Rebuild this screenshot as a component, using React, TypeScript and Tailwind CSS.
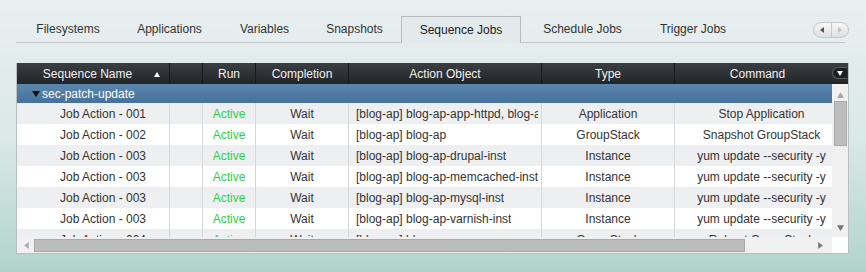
import React from "react";

const tabs: [string, string][] = [
  ["Filesystems", "w-[100px]"],
  ["Applications", "w-[103px]"],
  ["Variables", "w-[87px]"],
  ["Snapshots", "w-[93px]"],
  ["Sequence Jobs", "w-[120px]"],
  ["Schedule Jobs", "w-[123px]"],
  ["Trigger Jobs", "w-[98px]"]
];

const rows = [
  ["Job Action - 001", "[blog-ap] blog-ap-app-httpd, blog-ap-drupal-inst", "Application", "Stop Application"],
  ["Job Action - 002", "[blog-ap] blog-ap", "GroupStack", "Snapshot GroupStack"],
  ["Job Action - 003", "[blog-ap] blog-ap-drupal-inst", "Instance", "yum update --security -y"],
  ["Job Action - 003", "[blog-ap] blog-ap-memcached-inst", "Instance", "yum update --security -y"],
  ["Job Action - 003", "[blog-ap] blog-ap-mysql-inst", "Instance", "yum update --security -y"],
  ["Job Action - 003", "[blog-ap] blog-ap-varnish-inst", "Instance", "yum update --security -y"],
  ["Job Action - 004", "[blog-ap] blog-ap", "GroupStack", "Reboot GroupStack"]
];

function Tri({ dir, color, size = 6 }: { dir: "up" | "down" | "left" | "right"; color: string; size?: number }) {
  const pts = {
    up: "0,6 6,6 3,1",
    down: "0,1 6,1 3,6",
    left: "5,0 5,6 1,3",
    right: "1,0 1,6 5,3"
  }[dir];
  return (
    <svg width={size} height={size} viewBox="0 0 6 6" className="block">
      <polygon points={pts} fill={color} />
    </svg>
  );
}

function TabBar() {
  return (
    <div className="flex items-end h-[27px] w-[829px] border-b border-[#c2c7c9]">
      <div className="flex items-end ml-[2px]">
        {tabs.map(([t, w]) =>
          t === "Sequence Jobs" ? (
            <div
              key={t}
              className={`${w} h-[27px] -mb-px flex items-center justify-center border border-b-0 border-[#b6bbbd] bg-[#e2eaec] text-[#222]`}
            >
              {t}
            </div>
          ) : (
            <div key={t} className={`${w} h-[26px] flex items-center justify-center text-[#333]`}>
              {t}
            </div>
          )
        )}
      </div>
      <div className="ml-auto -mr-[4px] mb-[4px] flex h-[16px] w-[36px] rounded-full border border-[#c4c8ca] bg-gradient-to-b from-[#f7f7f7] to-[#dedfe0] overflow-hidden">
        <div className="flex-1 flex items-center justify-center border-r border-[#c4c8ca]">
          <Tri dir="left" color="#555" />
        </div>
        <div className="flex-1 flex items-center justify-center">
          <Tri dir="right" color="#c2c2c2" />
        </div>
      </div>
    </div>
  );
}

function Header() {
  return (
    <div className="relative flex h-[21px] bg-gradient-to-b from-[#3b3f43] to-[#222528] text-[#f0f0f0]">
      <div className="w-[153px] shrink-0 flex items-center border-r border-[#17191b] pt-px">
        <span className="flex-1 text-center pl-[4px]">Sequence Name</span>
        <span className="mr-[9px]">
          <Tri dir="up" color="#fff" />
        </span>
      </div>
      <div className="w-[33px] shrink-0 border-r border-[#17191b]" />
      <div className="w-[53px] shrink-0 flex items-center justify-center border-r border-[#17191b] pt-px">Run</div>
      <div className="w-[93px] shrink-0 flex items-center justify-center border-r border-[#17191b] pt-px">Completion</div>
      <div className="w-[193px] shrink-0 flex items-center justify-center border-r border-[#17191b] pt-px">Action Object</div>
      <div className="w-[133px] shrink-0 flex items-center justify-center border-r border-[#17191b] pt-px">Type</div>
      <div className="flex-1 flex items-center justify-center pr-[8px] pt-px">Command</div>
      <div className="absolute right-px top-[4px] h-[12px] w-[15px] rounded-l-full border border-r-0 border-[#5a5e62] bg-[#1c1f22] flex items-center justify-center">
        <Tri dir="down" color="#fff" />
      </div>
    </div>
  );
}

function Row({ r, i }: { r: string[]; i: number }) {
  const cell = "shrink-0 h-full flex items-center border-r border-[#d6d7d8] overflow-hidden whitespace-nowrap";
  return (
    <div className={`flex h-[21px] w-max text-[#333] ${i % 2 === 0 ? "bg-[#eeeff0]" : "bg-white"}`}>
      <div className={`${cell} w-[153px] justify-center pl-[20px]`}>{r[0]}</div>
      <div className={`${cell} w-[33px]`} />
      <div className={`${cell} w-[53px] justify-center text-[#33d044]`}>Active</div>
      <div className={`${cell} w-[93px] justify-center`}>Wait</div>
      <div className={`${cell} w-[193px] pl-[7px] pr-[3px]`}>
        <span className="overflow-hidden">{r[1]}</span>
      </div>
      <div className={`${cell} w-[133px] justify-center`}>{r[2]}</div>
      <div className={`${cell} w-[173px] justify-center border-r-0`}>{r[3]}</div>
    </div>
  );
}

export default function App() {
  return (
    <div className="w-[866px] h-[272px] overflow-hidden bg-gradient-to-b from-[#e9eff1] via-[#dbe8e8] to-[#b1d3cb] pt-[16px] pl-[16px] text-[12px] font-['Liberation_Sans',Arial,sans-serif]">
      <TabBar />
      <div className="mt-[20px] w-[833px] h-[191px] flex flex-col border-x border-b border-[#b9c0c2] bg-[#f0f0f0]">
        <Header />
        <div className="flex h-[153px]">
          <div className="w-[815px] overflow-hidden bg-white">
            <div className="flex items-center h-[19px] bg-gradient-to-b from-[#5b86ad] to-[#46729b] text-white">
              <span className="ml-[15px] mr-[2px]">
                <svg width="8" height="6" viewBox="0 0 8 6" className="block">
                  <polygon points="0,0 8,0 4,6" fill="#111" />
                </svg>
              </span>
              sec-patch-update
            </div>
            {rows.map((r, i) => (
              <Row key={i} r={r} i={i} />
            ))}
          </div>
          <div className="flex-1 flex flex-col items-center bg-[#f0f0f0] pt-[7px] pb-[6px]">
            <Tri dir="up" color="#a8a8a8" size={7} />
            <div className="mt-[3px] h-[45px] w-[13px] bg-[#bdbdbd] border border-[#a9a9a9]" />
            <div className="mt-auto">
              <Tri dir="down" color="#777" size={7} />
            </div>
          </div>
        </div>
        <div className="flex h-[16px] items-center">
          <div className="w-[815px] h-full flex items-center bg-[#f0f0f0]">
            <span className="ml-[6px]">
              <Tri dir="left" color="#aaa" size={7} />
            </span>
            <div className="ml-[4px] h-[13px] w-[711px] bg-[#bcbcbc] border border-[#a9a9a9]" />
            <span className="ml-auto mr-[8px]">
              <Tri dir="right" color="#777" size={7} />
            </span>
          </div>
          <div className="flex-1 h-full bg-white" />
        </div>
      </div>
    </div>
  );
}
